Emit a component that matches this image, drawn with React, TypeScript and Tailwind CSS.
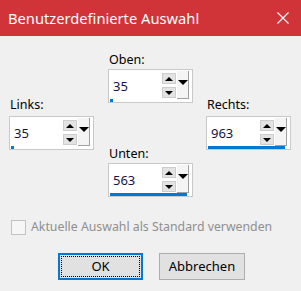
import React from "react";

const font = { fontFamily: '"Noto Sans", "Open Sans", sans-serif' };

function Spin({ value, fill }: { value: string; fill: number }) {
  return (
    <div className="w-[85px] h-[34px] border border-[#c9c9c9] bg-white flex flex-col">
      <div className="flex h-[29px] items-start">
        <div className="w-[53px] pl-[4px] pt-[8px] text-[13px] leading-[16px] text-[#141448]">
          {value}
        </div>
        <div className="w-[14px] flex flex-col gap-[3px] pt-[3px]">
          <div className="h-[11px] bg-[#e3e3e3] border border-[#cdcdcd] flex items-center justify-center">
            <div className="w-0 h-0 border-l-[4px] border-r-[4px] border-b-[4px] border-l-transparent border-r-transparent border-b-black" />
          </div>
          <div className="h-[11px] bg-[#e3e3e3] border border-[#cdcdcd] flex items-center justify-center">
            <div className="w-0 h-0 border-l-[4px] border-r-[4px] border-t-[4px] border-l-transparent border-r-transparent border-t-black" />
          </div>
        </div>
        <div className="ml-[1px] mt-[1px] w-[12px] h-[28px] bg-[#f4f4f4] border-r border-b border-[#a0a0a0] flex justify-center pt-[9px]">
          <div className="w-0 h-0 border-l-[5px] border-r-[5px] border-t-[5px] border-l-transparent border-r-transparent border-t-black" />
        </div>
      </div>
      <div className="h-[3px] pl-[1px]">
        <div className="h-[3px] bg-[#0078d7]" style={{ width: fill }} />
      </div>
    </div>
  );
}

function Field({ label, value, fill, gap }: { label: string; value: string; fill: number; gap: string }) {
  return (
    <div className="flex flex-col">
      <div className={`pl-[1px] text-[12.5px] leading-[18px] text-black ${gap}`}>{label}</div>
      <Spin value={value} fill={fill} />
    </div>
  );
}

export default function App() {
  return (
    <div className="w-[301px] h-[291px] bg-[#f0f0f0] flex flex-col" style={font}>
      <div className="h-[36px] bg-[#d13438] flex items-center justify-between pl-[8px] pr-[12px]">
        <span className="text-white text-[14.7px] leading-[20px]">Benutzerdefinierte Auswahl</span>
        <svg width="12" height="12" viewBox="0 0 12 12">
          <path d="M0.5 0.5 L11.5 11.5 M11.5 0.5 L0.5 11.5" stroke="white" strokeWidth="1.1" />
        </svg>
      </div>

      <div className="flex items-start pl-[9px] pt-[15px]">
        <div className="mt-[45px]">
          <Field label="Links:" value="35" fill={3} gap="mb-[2px]" />
        </div>
        <div className="ml-[14px] flex flex-col">
          <Field label="Oben:" value="35" fill={3} gap="" />
          <div className="mt-[42px]">
            <Field label="Unten:" value="563" fill={77} gap="" />
          </div>
        </div>
        <div className="ml-[13px] mt-[45px]">
          <Field label="Rechts:" value="963" fill={77} gap="mb-[2px]" />
        </div>
      </div>

      <div className="flex items-center pl-[11px] mt-[22px]">
        <div className="w-[15px] h-[15px] border border-[#c2c2c2] bg-[#f6f6f6]" />
        <span className="ml-[5px] text-[12.3px] leading-[16px] text-[#8f8f8f]">
          Aktuelle Auswahl als Standard verwenden
        </span>
      </div>

      <div className="flex pl-[58px] mt-[18px] gap-[16px]">
        <div className="w-[85px] h-[27px] border-2 border-[#0078d7] bg-[#e1e1e1] p-[1px]">
          <div className="w-full h-full border border-dotted border-black flex items-center justify-center text-[13px] text-black">
            OK
          </div>
        </div>
        <div className="w-[86px] h-[27px] border border-[#adadad] bg-[#e1e1e1] flex items-center justify-center text-[13px] text-black">
          Abbrechen
        </div>
      </div>
    </div>
  );
}
